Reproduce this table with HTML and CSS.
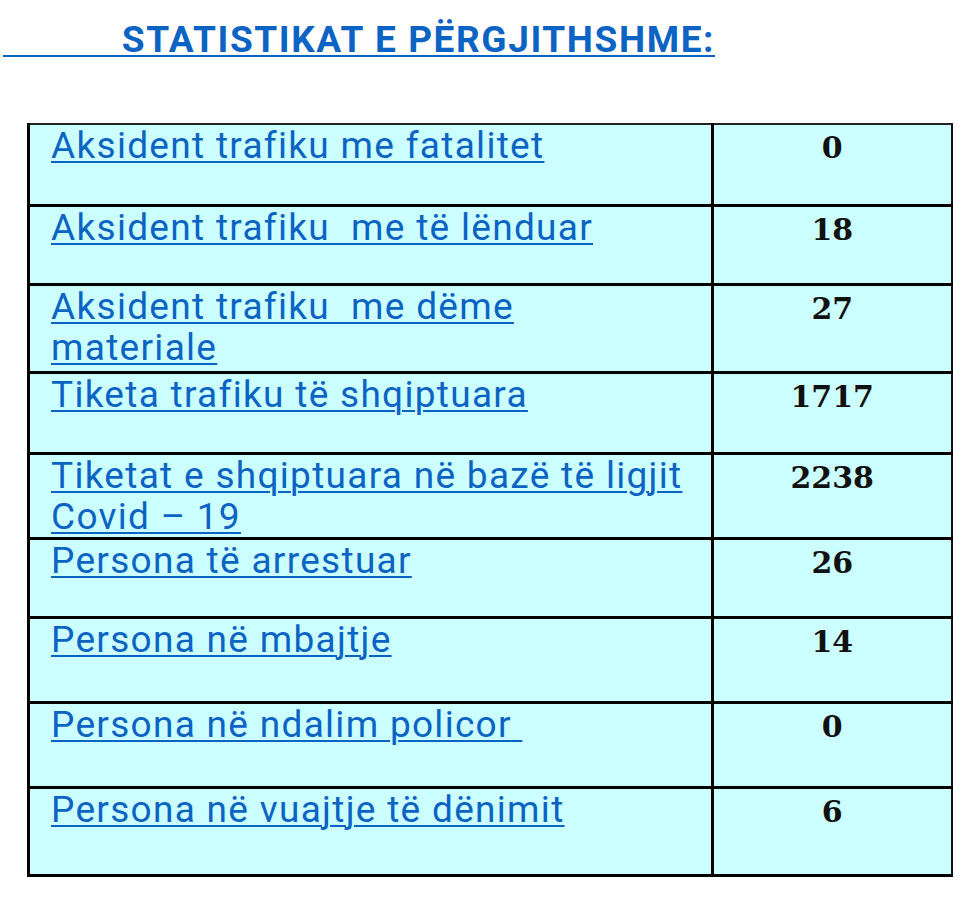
FILE: index.html
```html
<!DOCTYPE html>
<html lang="sq">
<head>
<meta charset="utf-8">
<title>Statistikat e përgjithshme</title>
<link rel="stylesheet" href="styles.css">
</head>
<body>
<h1 class="title"><a href="#" class="title-link">&nbsp;&nbsp;&nbsp;&nbsp;&nbsp;&nbsp;&nbsp;&nbsp;&nbsp;&nbsp;&nbsp;STATISTIKAT E PËRGJITHSHME:</a></h1>
<table class="stats">
  <colgroup><col class="col-label"><col class="col-value"></colgroup>
  <tbody>
    <tr class="row-a"><td class="label"><a href="#">Aksident trafiku me fatalitet</a></td><td class="value">0</td></tr>
    <tr class="row-b"><td class="label"><a href="#">Aksident trafiku&nbsp; me të lënduar</a></td><td class="value">18</td></tr>
    <tr class="row-c"><td class="label"><a href="#">Aksident trafiku&nbsp; me dëme materiale</a></td><td class="value">27</td></tr>
    <tr class="row-f"><td class="label"><a href="#">Tiketa trafiku të shqiptuara</a></td><td class="value">1717</td></tr>
    <tr class="row-d"><td class="label"><a href="#">Tiketat e shqiptuara në bazë të ligjit Covid – 19</a></td><td class="value">2238</td></tr>
    <tr class="row-b"><td class="label"><a href="#">Persona të arrestuar</a></td><td class="value">26</td></tr>
    <tr class="row-e"><td class="label"><a href="#">Persona në mbajtje</a></td><td class="value">14</td></tr>
    <tr class="row-e"><td class="label"><a href="#">Persona në ndalim policor&nbsp;</a></td><td class="value">0</td></tr>
    <tr class="row-c"><td class="label"><a href="#">Persona në vuajtje të dënimit</a></td><td class="value">6</td></tr>
  </tbody>
</table>
</body>
</html>
```
FILE: styles.css
```css
html, body {
  margin: 0;
  padding: 0;
  background: #ffffff;
}
body {
  padding: 0 3px;
  font-family: Roboto, "Liberation Sans", sans-serif;
}
.title {
  margin: 0;
  padding-top: 19px;
  font-size: 37px;
  line-height: 42px;
  font-weight: 700;
  letter-spacing: 1.6px;
  white-space: pre;
}
.title-link {
  color: #0b63c4;
  text-decoration: underline;
  text-decoration-thickness: 2px;
  text-underline-offset: 3px;
}
.stats {
  margin: 62px 0 0 24px;
  width: 923px;
  table-layout: fixed;
  border-collapse: collapse;
  background: #ccffff;
  border-top: 2px solid #222;
  border-left: 3px solid #000;
  border-right: 2px solid #111;
  border-bottom: 3px solid #000;
}
.col-label { width: 684px; }
.col-value { width: 239px; }
.stats td {
  vertical-align: top;
  border-top: 3px solid #000;
  padding: 0;
  line-height: 41px;
}
.stats tr:first-child td { border-top: 2px solid #222; }
.stats td.label {
  border-right: 3px solid #000;
  padding-left: 21px;
  padding-right: 23px;
  font-size: 37px;
  letter-spacing: 1.3px;
}
.label a {
  color: #0b63c4;
  text-decoration: underline;
  text-decoration-thickness: 2px;
  text-underline-offset: 3px;
}
.stats td.value {
  text-align: center;
  font-family: "DejaVu Serif", "Liberation Serif", serif;
  font-weight: 700;
  font-size: 30px;
  color: #111;
  padding-top: 2px;
}
.row-a td { height: 77px; }
.row-b td { height: 74px; }
.row-c td { height: 83px; }
.row-d td { height: 80px; }
.row-e td { height: 80px; }
.row-f td { height: 76px; }
```
